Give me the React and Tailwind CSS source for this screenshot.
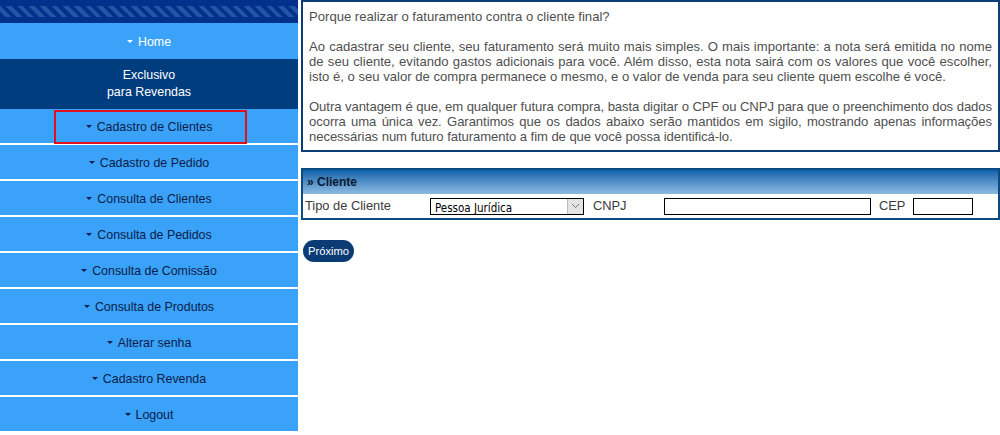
import { useState } from "react"

const menu = [
    "Cadastro de Clientes",
    "Cadastro de Pedido",
    "Consulta de Clientes",
    "Consulta de Pedidos",
    "Consulta de Comissão",
    "Consulta de Produtos",
    "Alterar senha",
    "Cadastro Revenda",
    "Logout",
]

const Caret = () => (
    <span className="inline-block w-0 h-0 border-l-[3px] border-r-[3px] border-t-[3px] border-l-transparent border-r-transparent border-t-current mr-[5px] relative -top-[1px]"></span>
)

const Sidebar = () => {
    const [active] = useState("Cadastro de Clientes")

    return (
        <div className="w-[298px] shrink-0 flex flex-col font-['Liberation_Sans',Arial,sans-serif] text-[12.4px]">
            <div className="h-[23px] bg-[#01318a] flex items-center">
                <div className="h-[11px] w-full bg-[repeating-linear-gradient(45deg,#01318a_0px,#01318a_4px,#2459a8_4px,#2459a8_8px)] opacity-90"></div>
            </div>
            <div className="h-[36px] pt-[2px] bg-[#3aa2f9] text-white flex items-center justify-center">
                <Caret />Home
            </div>
            <div className="h-[50px] bg-[#003d7f] text-white flex flex-col items-center justify-center leading-[17px]">
                <span>Exclusivo</span>
                <span>para Revendas</span>
            </div>
            {menu.map((item) => (
                <div key={item} className="relative h-[36px] pt-[2px] bg-[#3aa2f9] border-b-2 border-white text-[#0c1d4a] flex items-center justify-center">
                    <Caret />{item}
                    {item === active && (
                        <span className="absolute left-[54px] top-[1px] w-[193px] h-[34px] border-2 border-[#e0101c]"></span>
                    )}
                </div>
            ))}
        </div>
    )
}

const Main = () => {
    return (
        <div className="flex-1 pl-[3px] font-['Liberation_Sans',Arial,sans-serif] text-[12.85px] text-[#4f4f4f]">
            <div className="border-2 border-[#0c3d78] pl-[6px] pr-[6px] pt-[7px] pb-[6px] leading-[15px] text-justify text-[13.1px]">
                <p>Porque realizar o faturamento contra o cliente final?</p>
                <p className="mt-[15px]">
                    Ao cadastrar seu cliente, seu faturamento será muito mais simples. O mais importante: a nota será emitida no nome de seu cliente, evitando gastos adicionais para você. Além disso, esta nota sairá com os valores que você escolher, isto é, o seu valor de compra permanece o mesmo, e o valor de venda para seu cliente quem escolhe é você.
                </p>
                <p className="mt-[15px] tracking-[-0.07px]">
                    Outra vantagem é que, em qualquer futura compra, basta digitar o CPF ou CNPJ para que o preenchimento dos dados ocorra uma única vez. Garantimos que os dados abaixo serão mantidos em sigilo, mostrando apenas informações necessárias num futuro faturamento a fim de que você possa identificá-lo.
                </p>
            </div>

            <div className="mt-[16px] border-2 border-[#0c4a82]">
                <div className="h-[24px] bg-gradient-to-b from-[#0a62ab] to-[#8cbbe0] flex items-center px-[4px] font-bold text-[12px] text-[#0a1a33]">
                    » Cliente
                </div>
                <div className="h-[24px] flex items-center px-[2px] text-[#3a3a3a]">
                    <span className="w-[125px]">Tipo de Cliente</span>
                    <div className="w-[154px] h-[17px] border border-black flex items-center justify-between bg-white">
                        <span className="pl-[4px] pt-[3px] text-black font-['DejaVu_Sans_Condensed','DejaVu_Sans',sans-serif] font-normal text-[11.5px] leading-[14px]">Pessoa Jurídica</span>
                        <span className="w-[16px] h-[15px] bg-[#e4e4e4] border-l border-[#bdbdbd] flex items-center justify-center">
                            <svg width="9" height="6" viewBox="0 0 9 6"><path d="M1 1 L4.5 4.5 L8 1" fill="none" stroke="#777" strokeWidth="1" /></svg>
                        </span>
                    </div>
                    <span className="ml-[9px] w-[71px]">CNPJ</span>
                    <div className="w-[207px] h-[17px] border border-black bg-white"></div>
                    <span className="ml-[8px] w-[34px]">CEP</span>
                    <div className="w-[60px] h-[17px] border border-black bg-white"></div>
                </div>
            </div>

            <button className="mt-[20px] ml-[2px] h-[22px] px-[5px] rounded-full bg-[#0b3b74] text-white text-[11.2px]">
                Próximo
            </button>
        </div>
    )
}

export default function App() {
    return (
        <div className="w-[1000px] h-[435px] bg-white flex overflow-hidden">
            <Sidebar />
            <Main />
        </div>
    )
}
